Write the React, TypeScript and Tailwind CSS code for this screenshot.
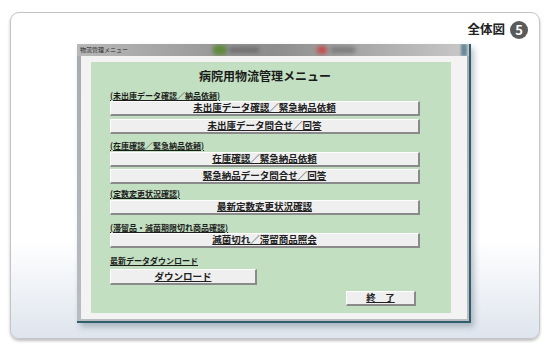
import React from 'react'

const font = { fontFamily: '"Noto Sans CJK JP", "Noto Sans", sans-serif' }

function SectionLabel({ text, mt }: { text: string; mt: string }) {
  return (
    <div className={`h-[10px] flex items-center text-[8px] leading-none font-bold text-[#1c1c1c] underline ${mt}`}>
      {text}
    </div>
  )
}

function MenuButton({ text, mt, w = 'w-[310px]', h = 'h-[15px]' }: { text: string; mt: string; w?: string; h?: string }) {
  return (
    <div
      className={`${w} ${h} ${mt} flex items-center justify-center bg-[#efefef] border-t border-l border-t-white border-l-white border-r-2 border-b-2 border-r-[#8a8a8a] border-b-[#8a8a8a] text-[9.5px] leading-none font-semibold text-[#202020] underline`}
    >
      {text}
    </div>
  )
}

export default function App() {
  return (
    <div className="w-[550px] h-[350px] bg-white pt-[12px] px-[10px]" style={font}>
      {/* outer card */}
      <div className="w-[530px] h-[327px] rounded-[9px] border border-[#c4c4c4] shadow-[0_2px_3px_rgba(0,0,0,0.25)] bg-gradient-to-b from-white from-[70%] to-[#dfe5ee] flex flex-col overflow-hidden">
        {/* header */}
        <div className="flex justify-end items-center gap-[5px] pt-[7px] pr-[11px] h-[26px]">
          <span className="text-[12.5px] font-bold text-[#222] leading-none">全体図</span>
          <span className="w-[18px] h-[18px] rounded-full bg-[#5a5a5a] text-white text-[13px] font-bold flex items-center justify-center leading-none">5</span>
        </div>

        {/* window screenshot */}
        <div className="ml-[66px] mt-[5px] w-[394px] h-[279px] flex flex-col bg-gradient-to-b from-[#a7aaae] to-[#b9bcc0] border-r-2 border-b-2 border-r-[#2f5e6c] border-b-[#2f5e6c] shadow-[3px_4px_6px_rgba(60,80,100,0.35)]">
          {/* titlebar */}
          <div className="relative h-[12px] flex items-center pl-[3px] bg-gradient-to-r from-[#b8b8b8] via-[#8d8d8d] to-[#c9c9c9] overflow-hidden">
            <span className="text-[6px] leading-none text-[#2a2a2a]">物流管理メニュー</span>
            <div className="absolute left-[136px] top-[1px] w-[14px] h-[10px] rounded-sm bg-[#5d8a3a] blur-[2px]" />
            <div className="absolute left-[152px] top-[3px] w-[30px] h-[6px] bg-[#6f6f6f] blur-[2px]" />
            <div className="absolute left-[240px] top-[2px] w-[10px] h-[8px] rounded-full bg-[#c64a4a] blur-[2px]" />
            <div className="absolute left-[254px] top-[3px] w-[24px] h-[6px] bg-[#7a7a7a] blur-[2px]" />
            <div className="absolute right-[2px] top-0 w-[6px] h-[12px] bg-[#6b8a9a] blur-[1px]" />
          </div>

          {/* window body */}
          <div className="flex-1 flex pl-[4px] pr-[2px] pb-[2px]">
            <div className="flex-1 flex bg-[#f3f3f3] pt-[6px] pl-[10px] pr-[16px] pb-[6px]">
              <div className="flex-1 bg-[#c3dfc1] pl-[19px] flex flex-col">
                <div className="w-[310px] h-[14px] mt-[7px] flex items-center justify-center text-[12px] font-bold text-[#1a1a1a] leading-none">
                  病院用物流管理メニュー
                </div>

                <SectionLabel text="(未出庫データ確認／納品依頼)" mt="mt-[8px]" />
                <MenuButton text="未出庫データ確認／緊急納品依頼" mt="mt-0" />
                <MenuButton text="未出庫データ問合せ／回答" mt="mt-[3px]" />

                <SectionLabel text="(在庫確認／緊急納品依頼)" mt="mt-[7px]" />
                <MenuButton text="在庫確認／緊急納品依頼" mt="mt-[1px]" />
                <MenuButton text="緊急納品データ問合せ／回答" mt="mt-[2px]" />

                <SectionLabel text="(定数変更状況確認)" mt="mt-[5px]" />
                <MenuButton text="最新定数変更状況確認" mt="mt-[1px]" />

                <SectionLabel text="(滞留品・滅菌期限切れ商品確認)" mt="mt-[8px]" />
                <MenuButton text="滅菌切れ／滞留商品照会" mt="mt-0" />

                <SectionLabel text="最新データダウンロード" mt="mt-[8px]" />
                <MenuButton text="ダウンロード" mt="mt-[3px]" w="w-[147px]" h="h-[16px]" />

                <div className="ml-[236px]">
                  <MenuButton text="終　了" mt="mt-[6px]" w="w-[70px]" />
                </div>
              </div>
            </div>
          </div>
        </div>
      </div>
    </div>
  )
}
